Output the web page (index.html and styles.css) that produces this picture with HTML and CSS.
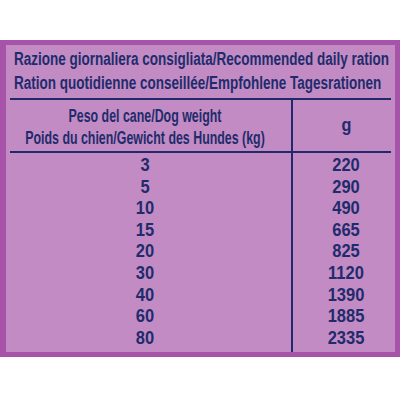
FILE: index.html
```html
<!DOCTYPE html>
<html lang="it">
<head>
<meta charset="utf-8">
<title>Razione giornaliera</title>
<link rel="stylesheet" href="styles.css">
</head>
<body>
<div class="label">
  <div class="panel">
    <div class="title">
      <div class="tline"><span class="tall">Razione giornaliera consigliata/Recommended daily ration</span></div>
      <div class="tline"><span class="tall">Ration quotidienne conseillée/Empfohlene Tagesrationen</span></div>
    </div>
    <div class="table">
      <div class="cell head weight">
        <div class="hline"><span class="tall">Peso del cane/Dog weight</span></div>
        <div class="hline"><span class="tall">Poids du chien/Gewicht des Hundes (kg)</span></div>
      </div>
      <div class="cell head grams"><span class="unit">g</span></div>
      <div class="cell data weight">
        <div class="num"><span class="tall">3</span></div>
        <div class="num"><span class="tall">5</span></div>
        <div class="num"><span class="tall">10</span></div>
        <div class="num"><span class="tall">15</span></div>
        <div class="num"><span class="tall">20</span></div>
        <div class="num"><span class="tall">30</span></div>
        <div class="num"><span class="tall">40</span></div>
        <div class="num"><span class="tall">60</span></div>
        <div class="num"><span class="tall">80</span></div>
      </div>
      <div class="cell data grams">
        <div class="num"><span class="tall">220</span></div>
        <div class="num"><span class="tall">290</span></div>
        <div class="num"><span class="tall">490</span></div>
        <div class="num"><span class="tall">665</span></div>
        <div class="num"><span class="tall">825</span></div>
        <div class="num"><span class="tall">1120</span></div>
        <div class="num"><span class="tall">1390</span></div>
        <div class="num"><span class="tall">1885</span></div>
        <div class="num"><span class="tall">2335</span></div>
      </div>
    </div>
  </div>
</div>
</body>
</html>
```
FILE: styles.css
```css
html, body {
  margin: 0;
  padding: 0;
  background: #ffffff;
}
body {
  font-family: "Liberation Sans", Arial, sans-serif;
  font-weight: 700;
  color: #1f2b6c;
}
.label {
  margin-top: 40px;
  height: 317px;
  box-sizing: border-box;
  padding: 5px 5px 5px 6px;
  background: #a653a9;
}
.panel {
  height: 100%;
  box-sizing: border-box;
  padding: 2px 4px 0 4px;
  background: #c28bc3;
  display: flex;
  flex-direction: column;
}
/* condensed look: natural width, stretched vertically */
.tall {
  display: inline-block;
  transform-origin: center center;
}
.title {
  padding-left: 4px;
  margin-bottom: 3px;
  font-size: 13.5px;
  line-height: 24px;
  white-space: nowrap;
}
.title .tall {
  transform: scaleY(1.407);
}
.tline {
  height: 24px;
}
.table {
  flex: 1;
  display: grid;
  grid-template-columns: 281px 1fr;
  grid-template-rows: auto 1fr;
  border-top: 2px solid #22296a;
}
.cell {
  text-align: center;
  white-space: nowrap;
}
.head {
  border-bottom: 2px solid #22296a;
}
.head.weight {
  padding: 5px 11px 2px 0;
  font-size: 12.4px;
  line-height: 22px;
}
.head.weight .tall {
  transform: scaleY(1.5);
}
.hline {
  height: 22px;
}
.head.grams {
  display: flex;
  align-items: center;
  justify-content: center;
  padding-left: 8px;
  font-size: 18px;
}
.unit {
  display: inline-block;
  transform: scaleX(0.9);
}
.grams {
  border-left: 2px solid #22296a;
}
.data {
  padding-top: 2px;
  font-size: 16.5px;
  line-height: 21.6px;
}
.data .tall {
  transform: scaleY(1.07);
}
.data.grams {
  padding-left: 8px;
}
.data.weight {
  padding-right: 11px;
}
.num {
  height: 21.6px;
}
```
